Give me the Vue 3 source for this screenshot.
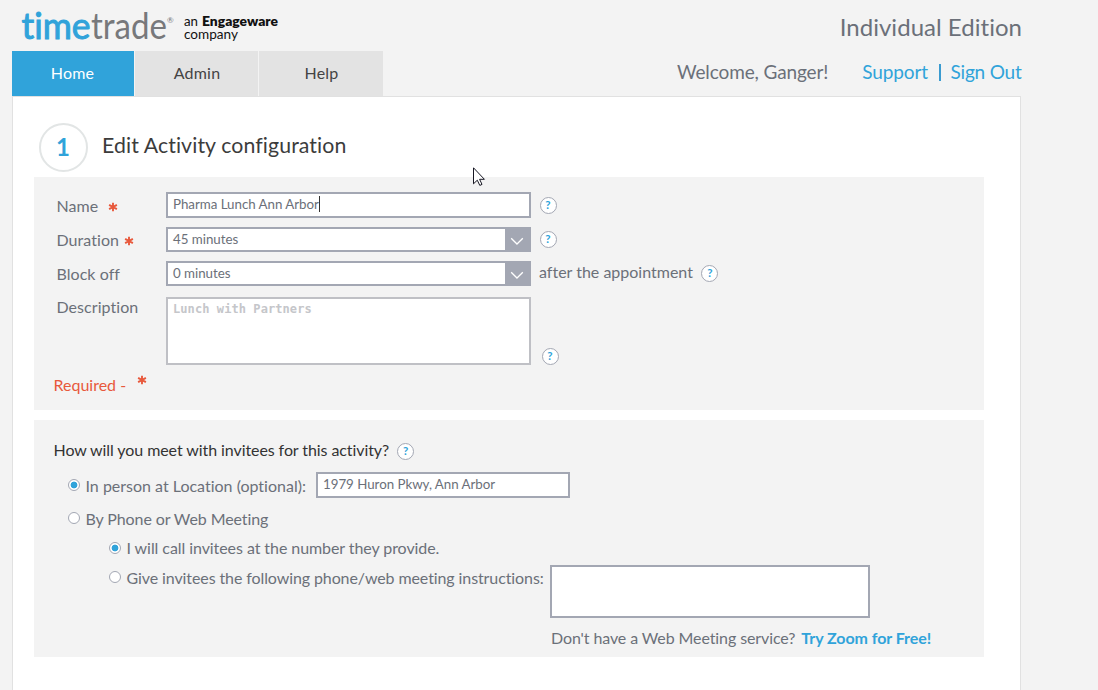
<script setup>
import { ref } from 'vue'

const tabs = ['Home', 'Admin', 'Help']
const name = ref('Pharma Lunch Ann Arbor')
const place = ref('1979 Huron Pkwy, Ann Arbor')
</script>

<template>
  <div class="page">
    <header class="top">
      <div class="left">
        <svg class="logo" width="270" height="51" viewBox="0 0 270 51">
          <text class="l-time" x="9.5" y="39" textLength="69" lengthAdjust="spacingAndGlyphs">time</text>
          <text class="l-trade" x="79" y="39" textLength="76" lengthAdjust="spacingAndGlyphs">trade</text>
          <text class="l-reg" x="155" y="23">®</text>
          <text class="l-sub" x="172" y="26" textLength="14" lengthAdjust="spacingAndGlyphs">an</text>
          <text class="l-sub bold" x="190" y="26" textLength="76" lengthAdjust="spacingAndGlyphs">Engageware</text>
          <text class="l-sub" x="172" y="39" textLength="54" lengthAdjust="spacingAndGlyphs">company</text>
        </svg>
        <nav class="tabs">
          <a v-for="(t, i) in tabs" :key="t" class="tab" :class="{ active: i === 0 }">{{ t }}</a>
        </nav>
      </div>
      <div class="right">
        <div class="edition">Individual Edition</div>
        <div class="user">
          <span class="welcome">Welcome, Ganger!</span>
          <a class="support">Support</a><i class="bar"></i><a class="signout">Sign Out</a>
        </div>
      </div>
    </header>

    <main class="card">
      <div class="heading">
        <span class="step">1</span>
        <h1>Edit Activity configuration</h1>
      </div>

      <section class="panel details">
        <div class="field f-name">
          <label><span class="t-name">Name</span>
            <svg class="star s1" width="10" height="10" viewBox="0 0 10 10"><path d="M5 .8v8.4M1.1 2.8l7.8 4.4M1.1 7.2l7.8-4.4" /></svg>
          </label>
          <div class="input"><span class="t-pharma">{{ name }}</span><i class="caret"></i></div>
          <span class="help">?</span>
        </div>
        <div class="field f-duration">
          <label><span class="t-duration">Duration</span>
            <svg class="star s2" width="10" height="10" viewBox="0 0 10 10"><path d="M5 .8v8.4M1.1 2.8l7.8 4.4M1.1 7.2l7.8-4.4" /></svg>
          </label>
          <div class="input select"><span>45 minutes</span>
            <b class="arrow"><svg width="14" height="9" viewBox="0 0 14 9"><path d="M1.2 1.2L7 7l5.8-5.8" /></svg></b>
          </div>
          <span class="help">?</span>
        </div>
        <div class="field f-block">
          <label><span>Block off</span></label>
          <div class="input select"><span>0 minutes</span>
            <b class="arrow"><svg width="14" height="9" viewBox="0 0 14 9"><path d="M1.2 1.2L7 7l5.8-5.8" /></svg></b>
          </div>
          <span class="after">after the appointment</span>
          <span class="help">?</span>
        </div>
        <div class="field f-desc">
          <label><span>Description</span></label>
          <div class="area">Lunch with Partners</div>
          <span class="help">?</span>
        </div>
        <div class="required"><span>Required -</span>
          <svg class="star s3" width="10" height="10" viewBox="0 0 10 10"><path d="M5 .8v8.4M1.1 2.8l7.8 4.4M1.1 7.2l7.8-4.4" /></svg>
        </div>
      </section>

      <section class="panel meeting">
        <div class="question"><span>How will you meet with invitees for this activity?</span><span class="help">?</span></div>
        <div class="option o1">
          <i class="radio on"></i><span>In person at Location (optional):</span>
          <div class="input place"><span>{{ place }}</span></div>
        </div>
        <div class="option o2"><i class="radio"></i><span>By Phone or Web Meeting</span></div>
        <div class="option o3"><i class="radio on"></i><span>I will call invitees at the number they provide.</span></div>
        <div class="option o4">
          <i class="radio"></i><span>Give invitees the following phone/web meeting instructions:</span>
          <div class="instructions"></div>
        </div>
        <div class="zoom"><span>Don't have a Web Meeting service?</span><a>Try Zoom for Free!</a></div>
      </section>
    </main>

    <svg class="pointer" width="13" height="20" viewBox="0 0 13 20">
      <path d="M.5 .8v16l3.8-3.6 2.5 5.2 2.2-1-2.4-5.1h4.8z" />
    </svg>
  </div>
</template>

<style>
html, body { margin: 0; background: #f3f3f3; overflow: hidden; }
</style>

<style scoped>
* { box-sizing: border-box; }
.page {
  position: relative;
  height: 690px;
  overflow: hidden;
  padding-left: 12px;
  background: #f3f3f3;
  color: #6b7079;
  font-family: Lato, "Liberation Sans", sans-serif;
  font-size: 16px;
  line-height: 20px;
  white-space: nowrap;
  font-variant-ligatures: none;
}
.top { display: flex; justify-content: space-between; width: 1009px; height: 96px; }
.left { display: flex; flex-direction: column; }
.logo { display: block; flex: none; }
.l-time, .l-trade { font-family: Lato, sans-serif; font-size: 37px; }
.l-time { fill: #30a3da; stroke: #30a3da; stroke-width: 1; }
.l-trade { fill: #77787b; }
.l-reg { font-size: 8px; fill: #77787b; }
.l-sub { font-size: 12.5px; fill: #111; }
.bold { font-weight: 800; }
.tabs { display: flex; gap: 1px; height: 45px; }
.tab {
  width: 123px; padding-left: 1px; line-height: 44px; text-align: center;
  background: #e3e3e3; color: #444; letter-spacing: .2px;
}
.tab:last-child { width: 124px; }
.tab.active { width: 122px; padding: 0 1px 0 0; background: #30a3da; color: #fff; }
.right { display: flex; flex-direction: column; align-items: flex-end; }
.edition { margin: 12px -1px 0 0; font-size: 24px; line-height: 30px; letter-spacing: .03px; }
.user { display: flex; align-items: center; margin: 17px -.5px 0 0; font-size: 19px; line-height: 26px; letter-spacing: -.12px; }
.user a, .zoom a { color: #30a3da; }
.support { margin-left: 34px; }
.signout { letter-spacing: -.2px; }
.bar { width: 1.5px; height: 17px; margin: 0 10px 0 11px; background: #3a9bd0; }

.card { width: 1009px; height: 620px; padding: 26px 0 0 21px; background: #fff; border: 1px solid #e1e1e1; }
.heading { display: flex; height: 54px; padding-left: 5px; }
.step {
  width: 49px; height: 49px; border: 2px solid #e2e5e5; border-radius: 50%;
  color: #30a3da; font-size: 24px; font-weight: 700; line-height: 44px; text-align: center; padding-right: 1px;
}
h1 { margin: 6px 0 0 14px; color: #3c3c3c; font-size: 21.3px; font-weight: 400; line-height: 32px; letter-spacing: .09px; }
.panel { width: 950px; background: #f3f3f3; }
.details { height: 233px; padding-top: 15px; }
.meeting { height: 237px; margin-top: 10px; padding-top: 20px; letter-spacing: -.1px; }

.field { display: flex; align-items: flex-start; padding-left: 22.5px; }
label { display: flex; width: 109.5px; flex: none; letter-spacing: .05px; }
.f-name { height: 35px; }
.f-name label { padding-top: 4px; }
.f-duration, .f-block { height: 34px; }
.f-duration label, .f-block label { padding-top: 3px; }
.f-desc { height: 70px; padding-top: 2px; }
.star path { fill: none; stroke: #e8593c; stroke-width: 1.9; }
.s1 { margin: 6px 0 0 9.5px; }
.s2 { margin: 6px 0 0 5px; }
.s3 { margin: 0 0 0 11px; }
.input {
  display: flex; width: 365px; height: 26px; flex: none; padding-left: 5px;
  border: 2px solid #a3a7b3; background: #fff; font-size: 13.33px; line-height: 20px; letter-spacing: -.03px;
}
.caret { width: 1px; height: 16px; margin-top: 2px; background: #333; }
.select { height: 25px; justify-content: space-between; line-height: 20px; }
.arrow { display: flex; width: 24px; height: 21px; align-items: center; justify-content: center; background: #a3a7b3; padding: 4px 1px 0 0; }
.arrow path { fill: none; stroke: #fff; stroke-width: 1.3; }
.help {
  width: 17px; height: 17px; flex: none; border: 1.3px solid #a3a7b3; border-radius: 50%;
  background: #fff; color: #30a3da; font-size: 11.5px; font-weight: 700; line-height: 14px; text-align: center; letter-spacing: 0;
}
.f-name .help { margin: 5px 0 0 8.5px; }
.f-duration .help { margin: 4px 0 0 8.5px; }
.after { margin: 1px 0 0 8px; }
.f-block .help { margin: 4px 0 0 8.5px; }
.area {
  width: 365px; height: 68px; flex: none; padding: 2px 5px; border: 2px solid #bfc0c5; background: #fff;
  color: #c5c6ca; font: bold 12px/17px "DejaVu Sans Mono", monospace; letter-spacing: .08px;
}
.f-desc .help { margin: 51px 0 0 10.5px; }
.required { display: flex; padding: 10px 0 0 19.5px; color: #e8593c; }

.question { display: flex; padding-left: 19.5px; color: #333; letter-spacing: -.08px; }
.question .help { margin: 3px 0 0 8px; }
.option { display: flex; align-items: flex-start; }
.radio { width: 12px; height: 12px; flex: none; border: 1.3px solid #a3a7b3; border-radius: 50%; background: #fff; }
.radio.on { background: radial-gradient(circle, #30a3da 3.1px, #fff 3.7px); }
.option .radio { margin: 3px 5.5px 0 0; }
.o1, .o2 { padding-left: 34px; }
.o3, .o4 { padding-left: 75px; }
.o1 { height: 40px; padding-top: 12px; }
.o1 > span { margin-top: 4px; letter-spacing: 0; }
.o1 .radio { margin-top: 7px; }
.place { width: 254px; margin-left: auto; margin-right: 414px; }
.o2 { height: 29px; padding-top: 9px; }
.o2 .radio { margin-top: 3px; }
.o3 { height: 29px; padding-top: 9px; letter-spacing: -.07px; }
.o3 .radio { margin-top: 4px; }
.o4 { height: 68px; padding-top: 7px; }
.o4 > span { margin-top: 3px; }
.o4 .radio { margin-top: 6px; }
.instructions { width: 320px; height: 53px; margin-left: auto; margin-right: 114px; border: 2px solid #a3a7b3; background: #fff; }
.zoom { display: flex; padding: 2px 0 0 517px; }
.zoom a { margin-left: 6px; font-weight: 700; letter-spacing: -.06px; }
.pointer { position: absolute; left: 473px; top: 167px; }
.pointer path { fill: #fff; stroke: #171723; stroke-width: 1; }
</style>
